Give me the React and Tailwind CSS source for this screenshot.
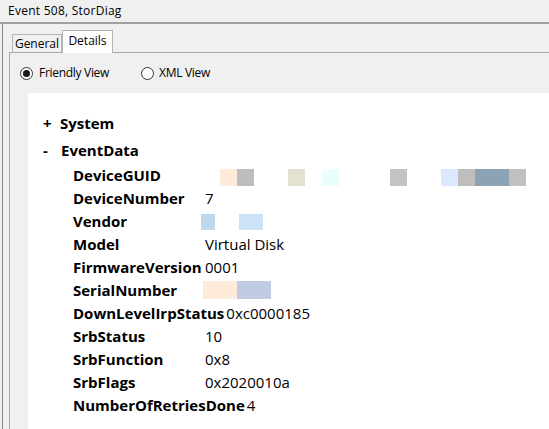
export default function App() {
  const rows = [
    ["DeviceGUID", "guid"],
    ["DeviceNumber", "7"],
    ["Vendor", "vendor"],
    ["Model", "Virtual Disk"],
    ["FirmwareVersion", "0001"],
    ["SerialNumber", "serial"],
    ["DownLevelIrpStatus", "0xc0000185"],
    ["SrbStatus", "10"],
    ["SrbFunction", "0x8"],
    ["SrbFlags", "0x2020010a"],
    ["NumberOfRetriesDone", "4"],
  ];

  const renderValue = (v) => {
    if (v === "guid")
      return (
        <span className="flex h-[17px] mt-[5px]">
          <span className="ml-[15px] w-[17px] bg-[#feebd9]" />
          <span className="w-[17px] bg-[#bdbdbd]" />
          <span className="ml-[34px] w-[17px] bg-[#e3e2d0]" />
          <span className="ml-[17px] w-[17px] bg-[#ebfefe]" />
          <span className="ml-[51px] w-[17px] bg-[#c3c3c3]" />
          <span className="ml-[34px] w-[17px] bg-[#daeafc]" />
          <span className="w-[17px] bg-[#bebebe]" />
          <span className="w-[34px] bg-[#8ca2b5]" />
          <span className="w-[17px] bg-[#c0c0c0]" />
        </span>
      );
    if (v === "vendor")
      return (
        <span className="flex h-[16px] mt-[4px]">
          <span className="ml-[-4px] w-[14px] bg-[#c0d8ec]" />
          <span className="ml-[24px] w-[24px] bg-[#cce2f7]" />
        </span>
      );
    if (v === "serial")
      return (
        <span className="flex h-[18px] mt-[2px]">
          <span className="ml-[-2px] w-[34px] bg-[#feebda]" />
          <span className="w-[34px] bg-[#c0cce3]" />
        </span>
      );
    return <span>{v}</span>;
  };

  return (
    <div className="w-[549px] h-[429px] overflow-hidden bg-[#f0f0f0] flex flex-col font-['Open_Sans',sans-serif] text-black">
      <div className="h-[22px] shrink-0 flex items-center pl-[8px] text-[12px] tracking-[0.25px]">
        Event 508, StorDiag
      </div>
      <div className="flex-1 flex flex-col border-t-2 border-[#a0a0a0] pl-[2px] min-h-0">
        <div className="flex-1 flex flex-col border-l border-[#8a8a8a] pl-[6px] min-h-0">
          <div className="h-[28px] shrink-0 flex items-end pl-[3px] text-[12px]">
            <div className="h-[18px] w-[50px] border border-b-0 border-[#b4b4b4] bg-[#f0f0f0] flex items-center justify-center">
              General
            </div>
            <div className="h-[23px] w-[51px] border border-b-0 border-[#b4b4b4] bg-white flex items-center justify-center pb-[2px] mb-[-1px] relative z-10">
              Details
            </div>
          </div>
          <div className="flex-1 flex flex-col border-t border-l border-[#a9a9a9] min-h-0">
            <div className="h-[40px] shrink-0 flex items-center text-[12px] pl-[10px] tracking-[-0.3px]">
              <span className="w-[13px] h-[13px] rounded-full border border-[#333] flex items-center justify-center bg-white">
                <span className="w-[7px] h-[7px] rounded-full bg-[#1a1a1a]" />
              </span>
              <span className="ml-[6px]">Friendly View</span>
              <span className="ml-[32px] w-[13px] h-[13px] rounded-full border border-[#333] bg-white" />
              <span className="ml-[5px]">XML View</span>
            </div>
            <div className="flex-1 ml-[18px] bg-white pl-[15px] pt-[19px] text-[15px] leading-[23px]">
              <div className="flex font-bold">
                <span className="w-[17px]">+</span>
                <span>System</span>
              </div>
              <div className="flex font-bold mt-[4px]">
                <span className="w-[18px]">-</span>
                <span>EventData</span>
              </div>
              <div className="pl-[30px] mt-[2px]">
                {rows.map(([k, v]) => (
                  <div key={k} className="flex h-[23px]">
                    <span className="min-w-[132px] pr-[2px] font-bold">{k}</span>
                    {renderValue(v)}
                  </div>
                ))}
              </div>
            </div>
          </div>
        </div>
      </div>
    </div>
  );
}
